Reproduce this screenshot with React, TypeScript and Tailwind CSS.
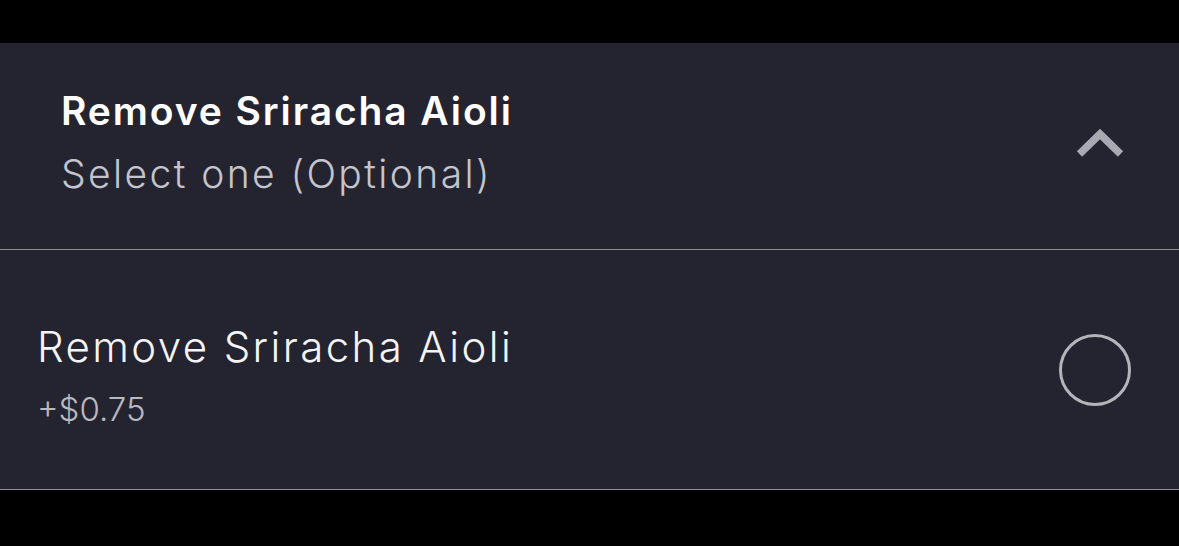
import React from 'react';

function ChevronUp() {
  return (
    <svg width="48" height="32" viewBox="0 0 48 32" fill="none" className="mb-[7px]">
      <path d="M3.5 27 L24 7 L44.5 27" stroke="#a9a9b1" strokeWidth="7.5" strokeLinejoin="miter" />
    </svg>
  );
}

export default function App() {
  return (
    <div
      className="w-[1179px] h-[546px] bg-black flex flex-col overflow-hidden"
      style={{ fontFamily: 'Inter, "Noto Sans", sans-serif' }}
    >
      <div className="h-[43px] shrink-0" />

      {/* Заголовок группы */}
      <div className="h-[207px] shrink-0 bg-[#242430] border-b border-[#8e8e94] flex items-center justify-between pl-[61px] pr-[55px]">
        <div className="flex flex-col mb-[9px]">
          <span className="text-[39px] leading-[64px] font-semibold text-white tracking-[1.9px]">
            Remove Sriracha Aioli
          </span>
          <span className="text-[39px] leading-[62px] font-light text-[#c4c4cc] tracking-[2.4px]">
            Select one (Optional)
          </span>
        </div>
        <ChevronUp />
      </div>

      {/* Вариант */}
      <div className="h-[240px] shrink-0 bg-[#242430] border-b border-[#8e8e94] flex items-center justify-between pl-[37px] pr-[48px]">
        <div className="flex flex-col mt-[15px]">
          <span className="text-[42px] leading-[64px] font-light text-[#f4f4f6] tracking-[2.4px]">
            Remove Sriracha Aioli
          </span>
          <span className="text-[33px] leading-[60px] font-light text-[#b9b9c0]">
            +$0.75
          </span>
        </div>
        <div className="w-[72px] h-[72px] rounded-full border-[3px] border-[#b4b4bb]" />
      </div>
    </div>
  );
}
